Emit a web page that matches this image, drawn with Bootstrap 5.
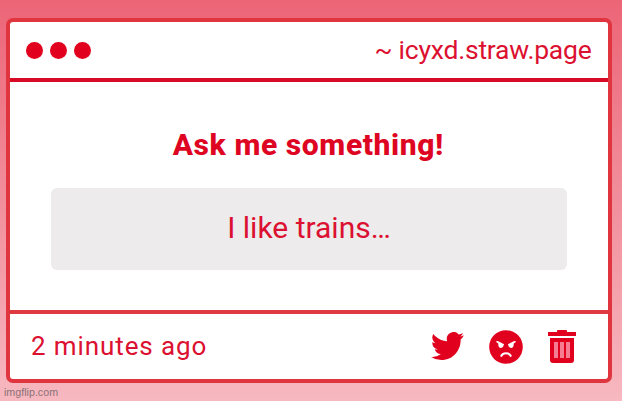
<!DOCTYPE html>
<html lang="en">
<head>
    <meta charset="UTF-8">
    <meta name="viewport" content="width=device-width, initial-scale=1.0">
    <title>Ask me something!</title>

    <!-- Bootstrap CSS -->
    <link href="https://cdn.jsdelivr.net/npm/bootstrap@5.3.0/dist/css/bootstrap.min.css" rel="stylesheet">

    <style>
        body {
            height: 401px;
            padding: 18px 10.5px 0 6px;
            font-family: Roboto, "Liberation Sans", sans-serif;
            color: #dc1030;
            background: linear-gradient(#ec6577, #f7b8c0);
            line-height: 1;
        }
        .ask-window {
            height: 365px;
            border: 4px solid #e0353f;
            border-radius: 7px;
        }
        .ask-top {
            height: 60px;
            padding: 0 16px 0 16px;
            border-bottom: 4px solid #d90a26;
        }
        .dot {
            width: 17px;
            height: 17px;
            background: #e1001e;
        }
        .dots {
            gap: 7.1px;
        }
        .site {
            font-size: 26.5px;
            letter-spacing: -0.22px;
            padding-bottom: 0;
        }
        .ask-main {
            padding: 48px 40.5px 0 41px;
        }
        .ask-title {
            height: 30px;
            margin-bottom: 28px;
            padding-right: 1.5px;
            font-size: 30px;
            font-weight: 800;
            letter-spacing: 0.6px;
            color: #de0522;
            white-space: nowrap;
        }
        .answer {
            height: 82px;
            border-radius: 6px;
            background: #edebec;
            font-size: 30px;
            padding-bottom: 2px;
        }
        .ask-bottom {
            height: 69px;
            padding: 0 32px 0 21px;
            border-top: 4px solid #dd3a42;
        }
        .ago {
            padding-bottom: 1px;
            font-size: 26px;
            letter-spacing: 0.9px;
        }
        .icons {
            gap: 25px;
            padding-top: 1px;
            color: #e1001e;
        }
        .bird,
        .trash {
            margin-bottom: 2px;
        }
        .watermark {
            padding: 4px 0 0 4px;
            margin-left: -6px;
            font-family: "Liberation Sans", Arial, sans-serif;
            font-size: 10.7px;
            color: #8c7378;
        }
    </style>
</head>
<body class="overflow-hidden">

    <div class="ask-window bg-white d-flex flex-column">
        <!-- Title bar -->
        <div class="ask-top d-flex align-items-center justify-content-between">
            <div class="dots d-flex">
                <span class="dot rounded-circle"></span>
                <span class="dot rounded-circle"></span>
                <span class="dot rounded-circle"></span>
            </div>
            <div class="site">~ icyxd.straw.page</div>
        </div>

        <!-- Question and answer -->
        <div class="ask-main flex-grow-1">
            <div class="ask-title text-center">Ask me something!</div>
            <div class="answer d-flex align-items-center justify-content-center">I like trains…</div>
        </div>

        <!-- Footer -->
        <div class="ask-bottom d-flex align-items-center justify-content-between">
            <div class="ago">2 minutes ago</div>
            <div class="icons d-flex align-items-center">
                <svg class="bird" width="33" height="28" viewBox="0 -0.5 24 20" preserveAspectRatio="none" fill="currentColor">
                    <path d="M23.95 1.8a8 8 0 0 1-2.6.9 4.96 4.96 0 0 0 1.9-2.5c-.95.56-2 .8-3.13 1A4.92 4.92 0 0 0 11.78 6.03C7.69 5.84 4.07 3.87 1.64.9a4.93 4.93 0 0 0 1.52 6.57 4.9 4.9 0 0 1-2.23-.61v.06a4.92 4.92 0 0 0 3.95 4.83 5 5 0 0 1-2.21.08 4.94 4.94 0 0 0 4.6 3.42A9.87 9.87 0 0 1 0 17.29 14 14 0 0 0 7.55 19.5c9.05 0 14-7.5 14-13.99 0-.21 0-.42-.02-.63a9.94 9.94 0 0 0 2.42-3.08z"/>
                </svg>
                <svg width="34" height="34" viewBox="0 0 33 33">
                    <circle cx="16.5" cy="16.5" r="16.3" fill="currentColor"/>
                    <path d="M7 11q1-.8 2 0l5.200 2.600q.8.600 0 1.200-.4 2.700-2.500 2.700-2.900 0-2.700-4.500L7.200 12zM26 11q-1-.8-2 0l-5.200 2.600q-.8.600 0 1.200.4 2.700 2.500 2.700 2.900 0 2.700-4.500l1.800-1z" fill="#fff"/>
                    <path d="M12 25c1.600-3.200 7.400-3.200 9 0" fill="none" stroke="#fff" stroke-width="2.100" stroke-linecap="round"/>
                </svg>
                <svg class="trash" width="28" height="33" viewBox="0 0 28 33">
                    <path d="M0 2h9V.8Q9 0 10 0h8q1 0 1 .8V2h9v4H0z" fill="currentColor"/>
                    <path d="M2 8h24v22q0 3-3 3H5q-3 0-3-3z" fill="currentColor"/>
                    <path d="M6 12h4v16H6zM12 12h4v16h-4zM18 12h4v16h-4z" fill="#f67d91"/>
                </svg>
            </div>
        </div>
    </div>

    <div class="watermark">imgflip.com</div>

    <!-- Bootstrap JS -->
    <script src="https://cdn.jsdelivr.net/npm/bootstrap@5.3.0/dist/js/bootstrap.bundle.min.js"></script>
</body>
</html>
